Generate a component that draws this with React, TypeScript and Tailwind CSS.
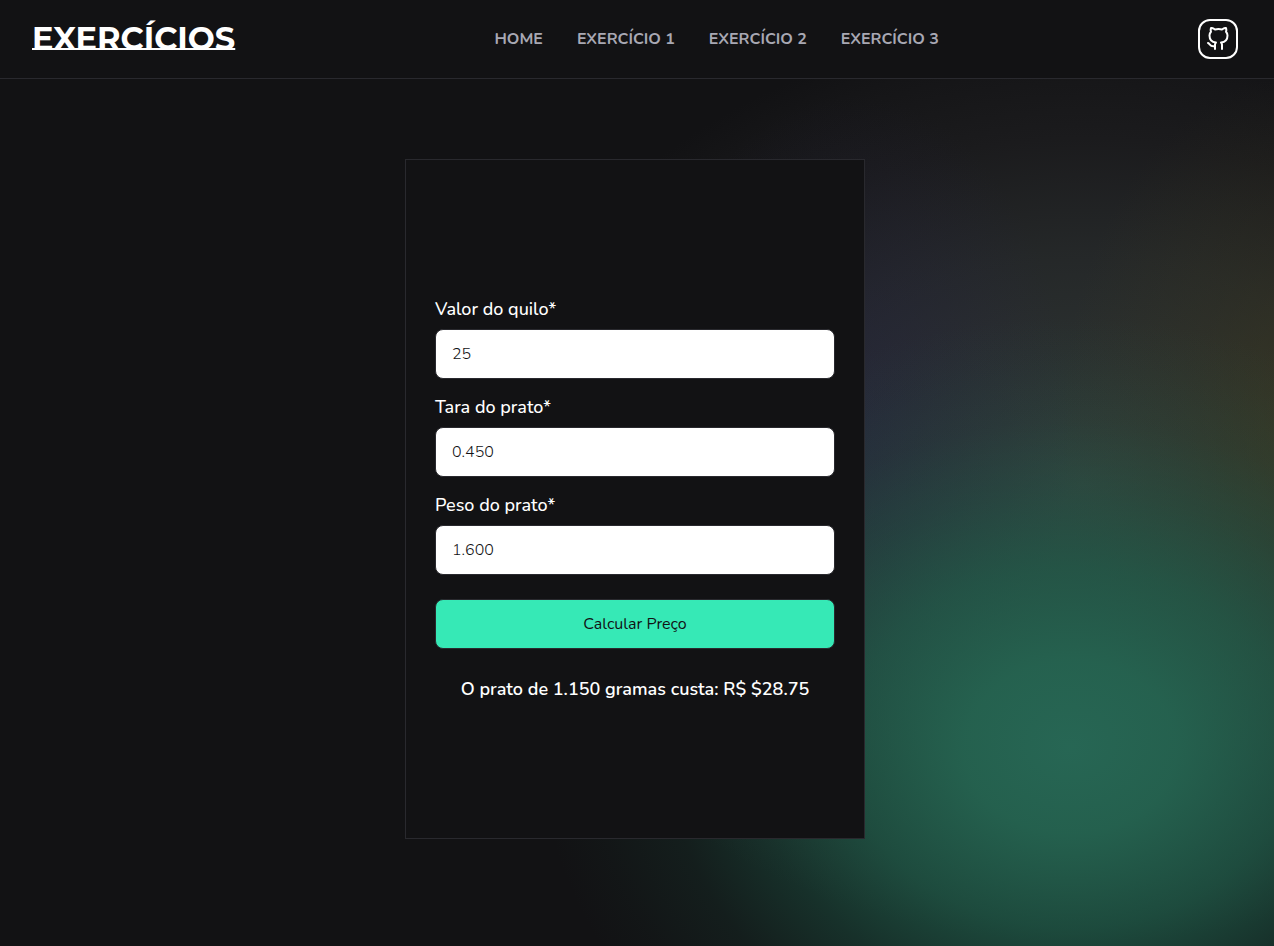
import { useState, type FormEvent } from "react";
import { FiGithub } from "react-icons/fi";

const links = ["Home", "Exercício 1", "Exercício 2", "Exercício 3"];

function Field({ id, label, value, onChange }: { id: string; label: string; value: string; onChange: (v: string) => void }) {
  return (
    <div className="flex flex-col gap-2">
      <label htmlFor={id} className="text-lg leading-6 font-medium">{label}</label>
      <input
        id={id}
        inputMode="decimal"
        required
        value={value}
        onChange={(e) => onChange(e.target.value)}
        className="h-[50px] w-full rounded-lg border border-[#29292e] bg-white px-4 text-base font-light text-[#121214]"
      />
    </div>
  );
}

export default function App() {
  const [price, setPrice] = useState("25");
  const [tare, setTare] = useState("0.450");
  const [weight, setWeight] = useState("1.600");
  const [result, setResult] = useState({ net: 1.15, total: 28.75 });

  function calculate(e: FormEvent) {
    e.preventDefault();
    const net = Number(weight) - Number(tare);
    setResult({ net, total: net * Number(price) });
  }

  return (
    <div className="flex min-h-screen flex-col bg-[#121214] bg-[radial-gradient(530px_430px_at_84%_79%,rgba(39,105,86,0.96)_0%,rgba(37,102,82,0.92)_20%,rgba(33,98,78,0.7)_42%,rgba(31,98,78,0.38)_60%,rgba(31,98,78,0.15)_76%,rgba(31,98,78,0.05)_90%,rgba(31,98,78,0)_100%),radial-gradient(220px_340px_at_67%_46%,rgba(38,36,76,0.42)_0%,rgba(38,36,76,0.2)_50%,rgba(38,36,76,0)_100%),radial-gradient(240px_360px_at_102%_46%,rgba(64,60,30,0.6)_0%,rgba(64,60,30,0.24)_50%,rgba(64,60,30,0)_100%),radial-gradient(600px_460px_at_85%_51%,rgba(50,58,56,1)_0%,rgba(50,55,55,0.58)_50%,rgba(50,50,52,0.28)_75%,rgba(50,50,52,0.1)_92%,rgba(50,50,52,0)_100%)] font-['Nunito','Lato',sans-serif] text-white">
      <header className="flex h-[79px] items-center justify-between border-b border-[#29292e] bg-[#121214] pr-9 pl-8">
        <a href="#" className="font-['Montserrat','Lato',sans-serif] text-[32px] leading-10 font-bold underline decoration-2 underline-offset-[-2px] [text-decoration-skip-ink:none]">EXERCÍCIOS</a>
        <nav className="flex gap-[34px] text-base font-bold text-[#a8a8b3] uppercase">
          {links.map((link) => (
            <a key={link} href="#">{link}</a>
          ))}
        </nav>
        <a href="#" aria-label="GitHub" className="grid size-10 place-items-center rounded-xl border-2 border-white">
          <FiGithub className="size-6" aria-hidden="true" />
        </a>
      </header>
      <main className="flex flex-1 justify-center px-4 pt-20 pb-[107px]">
        <form onSubmit={calculate} className="mr-1 flex min-h-[680px] w-full max-w-[460px] flex-col justify-center gap-4 border border-[#29292e] bg-[#121214] px-[29px]">
          <Field id="price" label="Valor do quilo*" value={price} onChange={setPrice} />
          <Field id="tare" label="Tara do prato*" value={tare} onChange={setTare} />
          <Field id="weight" label="Peso do prato*" value={weight} onChange={setWeight} />
          <button type="submit" className="mt-2 h-[50px] rounded-lg border border-[#29292e] bg-[#36e9b6] text-base text-[#121214]">Calcular Preço</button>
          <p className="mt-3 text-center text-lg leading-6 font-semibold">
            O prato de {result.net.toFixed(3)} gramas custa: R$ ${result.total.toFixed(2)}
          </p>
        </form>
      </main>
    </div>
  );
}
